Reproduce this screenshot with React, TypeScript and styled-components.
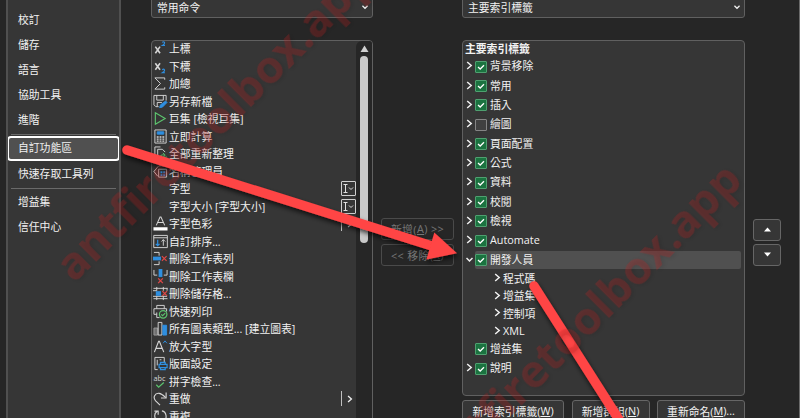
import React from "react";
import styled, { createGlobalStyle, css } from "styled-components";

const GlobalStyle = createGlobalStyle`
  * { box-sizing: border-box; }
  body {
    margin: 0;
    background: #262626;
    overflow: hidden;
    font-family: "Open Sans", "Noto Sans CJK TC", sans-serif;
    font-size: 10.8px;
    color: #f2f2f2;
  }
`;

const Dialog = styled.div`
  position: relative;
  display: flex;
  width: 800px;
  height: 418px;
  overflow: hidden;
  background: #262626;
  border-right: 1px solid #6a6a6a;
`;

const Sidebar = styled.nav`
  flex: none;
  width: 115px;
  height: 418px;
  margin-left: 6px;
  border-left: 2px solid #505050;
  border-right: 2px solid #505050;
  background: #363636;
  overflow: hidden;
`;

const NavList = styled.div`
  display: flex;
  flex-direction: column;
  margin-top: -18px;
`;

const NavItem = styled.div<{ $selected?: boolean }>`
  flex: none;
  height: 25px;
  line-height: 25px;
  padding-left: 10px;
  white-space: nowrap;
  ${(p) =>
    p.$selected &&
    css`
      margin: 1px -1px 0;
      line-height: 20px;
      padding-left: 9px;
      border: 2px solid #ffffff;
      border-radius: 4px;
      background: #505050;
    `}
`;

const NavRule = styled.div`
  flex: none;
  height: 1px;
  margin: 2px 3px 0;
  background: #6a6a6a;
`;

const CommandColumn = styled.div`
  flex: none;
  width: 222px;
  margin-left: 30px;
`;

const TabColumn = styled.div`
  flex: none;
  width: 283px;
  margin-left: 8px;
`;

const Select = styled.div`
  display: flex;
  align-items: center;
  justify-content: space-between;
  height: 21px;
  margin-top: -3px;
  padding: 0 4px 1px 5px;
  border: 1px solid #606060;
  border-radius: 3px;
  background: #363636;
`;

const Panel = styled.div<{ $height: number }>`
  display: flex;
  height: ${(p) => p.$height}px;
  margin-top: 22px;
  border: 1px solid #606060;
  border-radius: 4px;
  background: #363636;
  overflow: hidden;
`;

const Commands = styled.div`
  flex: 1;
  min-width: 0;
  margin-top: -1px;
`;

const CommandRow = styled.div`
  display: flex;
  align-items: center;
  height: 17.5px;
  line-height: 17.5px;
  white-space: nowrap;
  padding-left: 1px;
`;

const IconCell = styled.span`
  display: flex;
  flex: none;
  width: 15px;
  height: 15px;
  margin-right: 1px;
`;

const CommandLabel = styled.span`
  flex: 1;
`;

const FieldMark = styled.span`
  display: flex;
  align-items: center;
  justify-content: center;
  width: 15px;
  height: 15px;
  border: 1px solid #d0d0d0;
  border-radius: 1px;
`;

const SplitMark = styled.span`
  display: flex;
  align-items: center;
  width: 15px;
  height: 15px;
  padding-left: 5px;
  border-left: 1px solid #c0c0c0;
`;

const ScrollTrack = styled.div`
  display: flex;
  flex-direction: column;
  align-items: center;
  flex: none;
  width: 16px;
  padding-top: 4px;
  border-radius: 6px 0 0 0;
  background: #262626;
`;

const ScrollThumb = styled.div`
  width: 8px;
  height: 187px;
  margin-top: 3px;
  border-radius: 4px;
  background: #c8c8c8;
`;

const TransferColumn = styled.div`
  display: flex;
  flex-direction: column;
  flex: none;
  gap: 4px;
  width: 73px;
  margin: 218px 0 0 8px;
`;

const Button = styled.button<{ $disabled?: boolean; $width?: number }>`
  display: flex;
  align-items: center;
  justify-content: center;
  flex: none;
  width: ${(p) => (p.$width ? `${p.$width}px` : "100%")};
  height: 22px;
  padding: 0 0 1px;
  border: 1px solid ${(p) => (p.$disabled ? "#4a4a4a" : "#666666")};
  border-radius: 3px;
  background: ${(p) => (p.$disabled ? "#262626" : "#363636")};
  color: ${(p) => (p.$disabled ? "#767676" : "#f2f2f2")};
  font: inherit;
  letter-spacing: ${(p) => (p.$disabled ? "0.4px" : "0")};
  white-space: pre;
`;

const Tree = styled.div`
  flex: 1;
  padding: 0 3px 0 2px;
`;

const TreeHeading = styled.div`
  height: 15px;
  line-height: 15px;
  font-weight: 600;
`;

const TreeRow = styled.div`
  display: flex;
  align-items: center;
  height: 19.35px;
`;

const Toggle = styled.span`
  display: flex;
  align-items: center;
  flex: none;
  width: 10px;
  padding-left: 1px;
`;

const TreeItem = styled.span<{ $selected?: boolean }>`
  display: flex;
  align-items: center;
  flex: 1;
  height: 18px;
  margin-top: 1px;
  padding-bottom: 1px;
  border-radius: 2px;
  background: ${(p) => (p.$selected ? "#505050" : "transparent")};
`;

const TreeLabel = styled.span`
  padding-bottom: 1px;
`;

const CheckBox = styled.span<{ $checked: boolean }>`
  display: flex;
  flex: none;
  width: 12px;
  height: 12px;
  margin: 2px 3px 0 0;
  border: 1px solid ${(p) => (p.$checked ? "#4fa070" : "#858585")};
  border-radius: 1px;
  background: ${(p) => (p.$checked ? "#1b7340" : "#404040")};
`;

const SubRow = styled.div`
  display: flex;
  align-items: center;
  gap: 2px;
  height: 17.5px;
  padding-left: 29px;
`;

const ButtonBar = styled.div`
  display: flex;
  justify-content: space-between;
  margin-top: 4px;
`;

const OrderColumn = styled.div`
  display: flex;
  flex-direction: column;
  flex: none;
  gap: 3px;
  width: 28px;
  margin: 219px 0 0 8px;
`;

const Overlay = styled.svg`
  position: absolute;
  left: 0;
  top: 0;
  pointer-events: none;
`;

const WatermarkText = styled.text`
  font-family: "Open Sans", sans-serif;
  font-weight: 700;
  font-size: 45.5px;
  fill: rgba(200, 35, 35, 0.27);
  filter: drop-shadow(1px 2px 2px rgba(0, 0, 0, 0.4));
`;

const Chevron = ({ down = false, size = 7 }: { down?: boolean; size?: number }) => (
  <svg width={size} height={size + 2} viewBox="0 0 7 9" fill="none" stroke="#f0f0f0" strokeWidth="1.5">
    <path d={down ? "M0.5 3l3 3 3-3" : "M1.2 1l4 3.5-4 3.5"} />
  </svg>
);

const L = "#d6d6d6";
const B = "#2f8fe0";
const G = "#5cc46e";
const R = "#e04848";

const icons: Record<string, React.ReactNode> = {
  sup: (
    <>
      <path d="M2.5 6l5 7M7.500 6l-5 7" stroke={L} strokeWidth="1.700" />
      <path d="M9.800 1.500q1.600-1.300 2.400 0t-2.200 3.200h2.800" stroke={B} strokeWidth="1.200" />
    </>
  ),
  sub: (
    <>
      <path d="M2.500 4.500l5 7M7.500 4.500l-5 7" stroke={L} strokeWidth="1.700" />
      <path d="M9.800 11.500q1.600-1.300 2.400 0t-2.200 3.200h2.800" stroke={B} strokeWidth="1.200" />
    </>
  ),
  sum: <path d="M12.5 4V2H2l6 6-6 6h10.5v-2" stroke={L} />,
  save: (
    <>
      <path d="M6 13.5H3L1 11.5V1.5h13V7M4 1.5v5h7v-5M4.5 13V9h5" stroke={L} />
      <path d="M7 14.5l1-3 5.5-4 1.5 1.5-5 5z" fill={B} stroke={B} />
    </>
  ),
  play: <path d="M2.5 1.8L13 8 2.5 14.2z" stroke={G} strokeWidth="1.2" />,
  calc: (
    <>
      <path d="M2 1h12v14H2z" stroke={L} />
      <path d="M4.5 3h7v2.5h-7z" fill={B} stroke={B} />
      <path d="M4 8.5h8M4 10.8h8M4 13h8" stroke={L} strokeWidth="1.4" strokeDasharray="2 1" />
    </>
  ),
  refresh: (
    <>
      <path d="M2 12V1h6M5 14V3.500h5l3 3" stroke={L} />
      <path d="M7 13q0-4 5-3.500M10.500 7.500l2.500 2-2 2.500M14 11q0 4-5 3.500" stroke={G} />
    </>
  ),
  names: (
    <>
      <path d="M14 2H6L1 8l4 5M6 5.500h8.500V14H6z" stroke={L} />
      <path d="M8 7.800h2v2H8zM11 7.800h2v2h-2zM8 10.800h2v2H8zM11 10.800h2v2h-2z" fill={B} />
    </>
  ),
  color: (
    <>
      <path d="M3.500 10L7.500 1h1l4 9M5 7h6" stroke={L} strokeWidth="1.1" />
      <path d="M0.500 12h15v3.500H.5z" fill="#fff" />
    </>
  ),
  sort: (
    <>
      <path d="M.8 1.500h14.500v13H.8zM.8 4h14.500" stroke={L} />
      <path d="M5 6v6.500M3 10.500l2 2 2-2" stroke={B} strokeWidth="1.300" />
      <path d="M11 12.500V6M9 8l2-2 2 2" stroke={L} />
    </>
  ),
  delRow: (
    <>
      <path d="M1 1.500h5.500V5M1 14.500h5.500V11" stroke={L} />
      <path d="M0 6h8.500v4H0z" fill={B} />
      <path d="M9.500 5.500l5 5M14.500 5.500l-5 5" stroke={R} strokeWidth="1.300" />
    </>
  ),
  delCol: (
    <>
      <path d="M1 1v5.500h3.500M15 1v5.500h-3.500" stroke={L} />
      <path d="M6 0h4v8.500H6z" fill={B} />
      <path d="M5.500 10l5 5M10.500 10l-5 5" stroke={R} strokeWidth="1.300" />
    </>
  ),
  delCell: (
    <>
      <path d="M.5 2.500h15M.5 13.500h15M4 1v4M11 1v4M4 11v4M11 11v4M0 5h4M0 11h15M15 2v3" stroke={L} />
      <path d="M3 5.500h5.500v5H3z" fill={B} />
      <path d="M10 5.500l5 5M15 5.500l-5 5" stroke={R} strokeWidth="1.300" />
    </>
  ),
  print: (
    <>
      <path d="M4 5V1.500h8V5M4 11H1V5h13.500v3M4 9v5.500h3" stroke={L} />
      <circle cx="10.800" cy="11" r="4" stroke={G} strokeWidth="1.300" />
      <path d="M8.800 11l1.500 1.500L13 9.800" stroke={G} strokeWidth="1.200" />
    </>
  ),
  chart: (
    <>
      <path d="M1 7.500h4V15H1z" fill="#707070" stroke="#9a9a9a" />
      <path d="M5.500 1.500h4V15h-4z" stroke={L} />
      <path d="M10.500 4.500h4V15h-4z" fill={B} stroke={B} />
    </>
  ),
  grow: (
    <>
      <path d="M1.500 14L6 2.500h.8L11.500 14M3 10h7" stroke={L} strokeWidth="1.200" />
      <path d="M10.800 4.500l2-2.500 2 2.500" stroke={B} />
    </>
  ),
  page: (
    <>
      <path d="M5 14.500H2v-13h10V7M4.500 4v6M7 4h2" stroke={L} />
      <path d="M8 9V6.800h5V9M6.500 9h8.500v3.500H6.500zM8 12v2.500h5V12" stroke={B} strokeWidth="1.300" />
    </>
  ),
  redo: (
    <>
      <path d="M7.500 15L2.800 10.500C-.5 7 2 2 6.500 2.500c3 .3 4.500 2 7 4.500" stroke={L} strokeWidth="1.200" />
      <path d="M14 1.500V7.500H8.500" stroke={L} strokeWidth="1.200" />
    </>
  ),
  repeat: (
    <path d="M6 13C1 11 .5 5 4.500 2.500M1.500 2.200h4v4M9.500 2c5 1 6 8 2 11" stroke={L} strokeWidth="1.200" />
  ),
};

const CommandIcon = ({ name }: { name: string }) => (
  <svg width="15" height="15" viewBox="0 0 16 16" fill="none">
    {name === "spell" ? (
      <>
        <text x="0.5" y="7" fontSize="7.800" fill={L}>
          abc
        </text>
        <path d="M3.500 11.500l2.500 2.500 5.500-5" stroke={G} strokeWidth="1.300" />
      </>
    ) : (
      icons[name]
    )}
  </svg>
);

type Command = { icon?: string; label: string; mark?: "field" | "split" };

const commands: Command[] = [
  { icon: "sup", label: "上標" },
  { icon: "sub", label: "下標" },
  { icon: "sum", label: "加總" },
  { icon: "save", label: "另存新檔" },
  { icon: "play", label: "巨集 [檢視巨集]" },
  { icon: "calc", label: "立即計算" },
  { icon: "refresh", label: "全部重新整理" },
  { icon: "names", label: "名稱管理員" },
  { label: "字型", mark: "field" },
  { label: "字型大小 [字型大小]", mark: "field" },
  { icon: "color", label: "字型色彩", mark: "split" },
  { icon: "sort", label: "自訂排序..." },
  { icon: "delRow", label: "刪除工作表列" },
  { icon: "delCol", label: "刪除工作表欄" },
  { icon: "delCell", label: "刪除儲存格..." },
  { icon: "print", label: "快速列印" },
  { icon: "chart", label: "所有圖表類型... [建立圖表]" },
  { icon: "grow", label: "放大字型" },
  { icon: "page", label: "版面設定" },
  { icon: "spell", label: "拼字檢查..." },
  { icon: "redo", label: "重做", mark: "split" },
  { icon: "repeat", label: "重複" },
];

type Tab = { label: string; checked?: boolean; leaf?: boolean; children?: string[] };

const tabs: Tab[] = [
  { label: "背景移除" },
  { label: "常用" },
  { label: "插入" },
  { label: "繪圖", checked: false },
  { label: "頁面配置" },
  { label: "公式" },
  { label: "資料" },
  { label: "校閱" },
  { label: "檢視" },
  { label: "Automate" },
  { label: "開發人員", children: ["程式碼", "增益集", "控制項", "XML"] },
  { label: "增益集", leaf: true },
  { label: "說明" },
];

export default function App() {
  return (
    <>
      <GlobalStyle />
      <Dialog>
        <Sidebar>
          <NavList>
            <NavItem>資料</NavItem>
            <NavItem>校訂</NavItem>
            <NavItem>儲存</NavItem>
            <NavItem>語言</NavItem>
            <NavItem>協助工具</NavItem>
            <NavItem>進階</NavItem>
            <NavRule />
            <NavItem $selected>自訂功能區</NavItem>
            <NavItem>快速存取工具列</NavItem>
            <NavRule />
            <NavItem>增益集</NavItem>
            <NavItem>信任中心</NavItem>
          </NavList>
        </Sidebar>

        <CommandColumn>
          <Select>
            常用命令
            <Chevron down size={6} />
          </Select>
          <Panel $height={400}>
            <Commands>
              {commands.map((c) => (
                <CommandRow key={c.label}>
                  <IconCell>{c.icon && <CommandIcon name={c.icon} />}</IconCell>
                  <CommandLabel>{c.label}</CommandLabel>
                  {c.mark === "field" && (
                    <FieldMark>
                      <svg width="13" height="13" viewBox="0 0 13 13" fill="none" stroke="#e0e0e0">
                        <path d="M1.500 2.500h4M1.500 10.500h4M3.500 2.500v8M7 5.500l2 2 2-2" />
                      </svg>
                    </FieldMark>
                  )}
                  {c.mark === "split" && (
                    <SplitMark>
                      <Chevron size={6} />
                    </SplitMark>
                  )}
                </CommandRow>
              ))}
            </Commands>
            <ScrollTrack>
              <svg width="9" height="8" viewBox="0 0 9 8">
                <path d="M4.500 0.500L8.500 7h-8z" fill="#d0d0d0" />
              </svg>
              <ScrollThumb />
            </ScrollTrack>
          </Panel>
        </CommandColumn>

        <TransferColumn>
          <Button $disabled>
            新增(<u>A</u>) &gt;&gt;
          </Button>
          <Button $disabled>
            &lt;&lt; 移除(<u>R</u>)
          </Button>
        </TransferColumn>

        <TabColumn>
          <Select>
            主要索引標籤
            <Chevron down size={6} />
          </Select>
          <Panel $height={356}>
            <Tree>
              <TreeHeading>主要索引標籤</TreeHeading>
              {tabs.map((t) => (
                <React.Fragment key={t.label}>
                  <TreeRow>
                    <Toggle>{!t.leaf && <Chevron down={!!t.children} />}</Toggle>
                    <TreeItem $selected={!!t.children}>
                      <CheckBox $checked={t.checked !== false}>
                        {t.checked !== false && (
                          <svg width="10" height="10" viewBox="0 0 10 10" fill="none" stroke="#fff" strokeWidth="1.300">
                            <path d="M2 5l2.200 2L8 3.300" />
                          </svg>
                        )}
                      </CheckBox>
                      <TreeLabel>{t.label}</TreeLabel>
                    </TreeItem>
                  </TreeRow>
                  {t.children?.map((s) => (
                    <SubRow key={s}>
                      <Chevron />
                      {s}
                    </SubRow>
                  ))}
                </React.Fragment>
              ))}
            </Tree>
          </Panel>
          <ButtonBar>
            <Button $width={102}>
              新增索引標籤(<u>W</u>)
            </Button>
            <Button $width={78}>
              新增群組(<u>N</u>)
            </Button>
            <Button $width={88}>
              重新命名(<u>M</u>)...
            </Button>
          </ButtonBar>
        </TabColumn>

        <OrderColumn>
          <Button>
            <svg width="7" height="5" viewBox="0 0 7 5">
              <path d="M3.500 0.500L7 4.500H0z" fill="#fff" />
            </svg>
          </Button>
          <Button>
            <svg width="7" height="5" viewBox="0 0 7 5">
              <path d="M3.500 4.500L0 .5h7z" fill="#fff" />
            </svg>
          </Button>
        </OrderColumn>

        <Overlay width="800" height="418" viewBox="0 0 800 418">
          <defs>
            <filter id="arrowShadow" x="-20%" y="-20%" width="140%" height="140%">
              <feDropShadow dx="1" dy="3" stdDeviation="2.500" floodColor="#000" floodOpacity="0.7" />
            </filter>
          </defs>
          <g filter="url(#arrowShadow)">
            <path d="M534 286L640 452.500" stroke="#ff4444" strokeWidth="9.500" strokeLinecap="round" />
          </g>
          <WatermarkText transform="translate(74.300 283.700) rotate(-45)">antfiretoolbox.app</WatermarkText>
          <WatermarkText transform="translate(442.300 484.700) rotate(-45)">antfiretoolbox.app</WatermarkText>
          <g filter="url(#arrowShadow)">
            <path d="M127 150L432 246" stroke="#ff4444" strokeWidth="9.500" strokeLinecap="round" />
            <path d="M434.300 232.500L457 253.300L426.500 259.500z" fill="#ff4444" />
          </g>
        </Overlay>
      </Dialog>
    </>
  );
}
